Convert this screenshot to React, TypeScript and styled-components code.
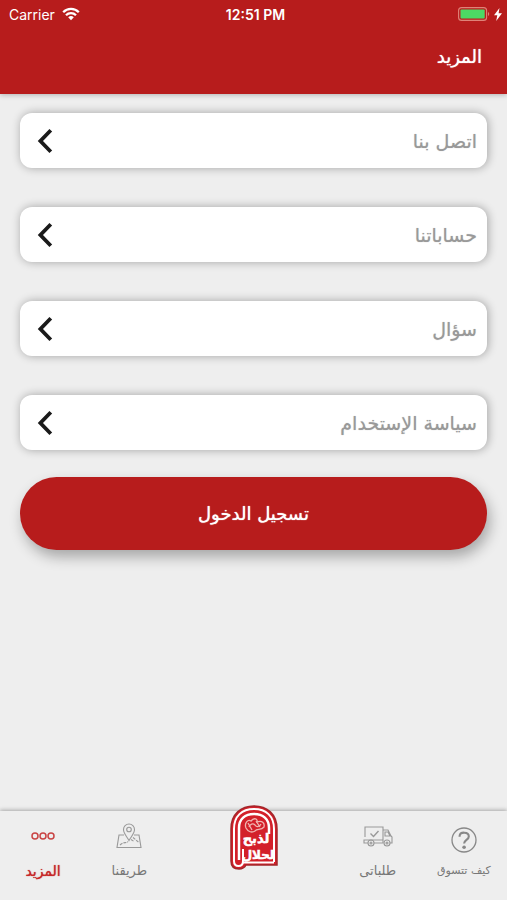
import React from "react";
import styled, { createGlobalStyle } from "styled-components";

const RED = "#b71c1c";

const Global = createGlobalStyle`
  *, *::before, *::after { box-sizing: border-box; }
  body {
    margin: 0;
    background: #eeeeee;
    font-family: "DejaVu Sans", "Noto Sans", sans-serif;
  }
  button { font-family: inherit; border: 0; cursor: pointer; }
  svg { display: block; }
`;

const Screen = styled.div`
  display: flex;
  flex-direction: column;
  min-height: 100vh;
`;

const Header = styled.header`
  background: ${RED};
  color: #ffffff;
  box-shadow: 0 1px 5px rgba(0, 0, 0, 0.25);
`;

const StatusBar = styled.div`
  display: grid;
  grid-template-columns: 1fr auto 1fr;
  align-items: center;
  height: 28px;
  padding: 0 5px 0 9px;
  font-family: Inter, sans-serif;
  font-size: 14px;
`;

const StatusGroup = styled.div<{ $end?: boolean }>`
  display: flex;
  align-items: center;
  justify-content: ${(p) => (p.$end ? "flex-end" : "flex-start")};
  gap: ${(p) => (p.$end ? 4 : 7)}px;
`;

const Clock = styled.time`
  font-weight: 600;
`;

const TitleBar = styled.div`
  display: flex;
  align-items: center;
  height: 66px;
  padding: 0 25px 8px;
`;

const Title = styled.h1`
  margin: 0;
  font-size: 18px;
  line-height: 28px;
  font-weight: 400;
  text-shadow: 0 0 1px currentColor;
`;

const Content = styled.main`
  flex: 1;
  padding: 19px 20px;
`;

const List = styled.ul`
  display: grid;
  gap: 39px;
  margin: 0 0 27px;
  padding: 0;
  list-style: none;
`;

const Row = styled.button`
  display: flex;
  align-items: center;
  justify-content: space-between;
  width: 100%;
  height: 55px;
  padding: 0 10px 0 16px;
  border-radius: 12px;
  background: #ffffff;
  color: #999999;
  font-size: 19px;
  line-height: 28px;
  text-shadow: 0 0 1px #bbbbbb;
  box-shadow: 1px 0 10px rgba(0, 0, 0, 0.32);
`;

const LoginButton = styled.button`
  width: 100%;
  height: 73px;
  border-radius: 37px;
  background: ${RED};
  color: #ffffff;
  font-size: 18px;
  line-height: 28px;
  text-shadow: 0 0 1px currentColor;
  box-shadow: 3px 7px 14px rgba(0, 0, 0, 0.3);
`;

const TabBar = styled.nav`
  display: grid;
  grid-template-columns: 17fr 17fr 32fr 17fr 17fr;
  height: 89px;
  background: #eeeeee;
  box-shadow: 0 -1px 4px rgba(0, 0, 0, 0.3);
`;

const Tab = styled.a<{ $active?: boolean; $small?: boolean }>`
  display: grid;
  grid-template-rows: 50px 20px;
  place-items: center;
  align-content: start;
  color: ${(p) => (p.$active ? "#c62828" : "#777777")};
  font-size: ${(p) => (p.$small ? 11 : p.$active ? 14 : 13)}px;
  line-height: 20px;
  text-shadow: ${(p) => (p.$active ? "0 0 1px currentColor" : "none")};
  white-space: nowrap;
  text-decoration: none;

  svg {
    margin-top: ${(p) => (p.$small ? 8 : 0)}px;
  }
`;

const LogoLink = styled.a`
  justify-self: center;
  margin-top: -7px;
`;

const Wifi = () => (
  <svg width="18" height="14" viewBox="0 0 18 14" fill="none" stroke="#fff" strokeWidth="2.3" aria-hidden="true">
    <path d="M1.2 5.2a11 11 0 0 1 15.6 0" />
    <path d="M4 8.2a7 7 0 0 1 10 0" />
    <path d="M9 13.2 6.2 10.3a4 4 0 0 1 5.6 0Z" fill="#fff" stroke="none" />
  </svg>
);

const Battery = () => (
  <svg width="32" height="14" viewBox="0 0 32 14" aria-hidden="true">
    <rect x="0.6" y="0.6" width="28" height="12.8" rx="3" fill="none" stroke="#df8378" strokeWidth="1.1" />
    <rect x="2.5" y="2.5" width="24.2" height="9" rx="1" fill="#4cd964" />
    <path d="M30 5v4c1.6-.5 1.6-3.5 0-4Z" fill="#df8378" />
  </svg>
);

const Bolt = () => (
  <svg width="8" height="13" viewBox="0 0 8 13" fill="#fff" aria-hidden="true">
    <path d="M5.5 0 0 7.3h3.3L2.2 13 8 5.3H4.6Z" />
  </svg>
);

const Chevron = () => (
  <svg width="17" height="26" viewBox="0 0 17 26" fill="none" stroke="#1a1a1a" strokeWidth="3.8" aria-hidden="true">
    <path d="M14.8 2.2 4.400 13l10.400 10.800" />
  </svg>
);

const QuestionIcon = () => (
  <svg width="26" height="26" viewBox="0 0 26 26" fill="none" stroke="#888" aria-hidden="true">
    <circle cx="13" cy="13" r="12" strokeWidth="1.3" />
    <path d="M8.600 9.800V9c.4-4.600 9.200-4.400 9.200.4 0 3.600-4.700 3.400-4.700 7.200" strokeWidth="2.1" />
    <circle cx="13.1" cy="20.300" r="1.800" fill="#888" stroke="none" />
  </svg>
);

const TruckIcon = () => (
  <svg width="30" height="21" viewBox="0 0 30 21" fill="none" stroke="#999" strokeWidth="1.1" aria-hidden="true">
    <path d="M5 17H1v-3h19M2 11V1h18v16h-9M20 4h5l3 6 1 1v6h-2M22 6h3l2 4h-5Z" />
    <path d="m7.500 7.500 3 3 5-5.500" strokeWidth="1.400" />
    <circle cx="8" cy="17" r="3" />
    <circle cx="8" cy="17" r="1" />
    <circle cx="24" cy="17" r="3" />
    <circle cx="24" cy="17" r="1" />
  </svg>
);

const MapIcon = () => (
  <svg width="26" height="26" viewBox="0 0 26 26" fill="none" stroke="#999" strokeWidth="1.1" aria-hidden="true">
    <path d="M8 12H3L1 24.500h24L23 12h-5" />
    <path d="M13 17.500C10.500 13 7.500 10.500 7.500 6.500a5.500 5.500 0 0 1 11 0c0 4-3 6.500-5.500 11Z" />
    <circle cx="13" cy="6.500" r="2.300" />
    <path d="M4 22c4-4 6-1 8-3.500M17 14.500l6 5M15 16.500l3 2" strokeDasharray="3 1" />
  </svg>
);

const MoreIcon = () => (
  <svg width="24" height="8" viewBox="0 0 24 8" fill="none" stroke="#c94444" strokeWidth="1.5" aria-hidden="true">
    <circle cx="4" cy="4" r="3" />
    <circle cx="12" cy="4" r="3" />
    <circle cx="20" cy="4" r="3" />
  </svg>
);

const Logo = () => (
  <svg width="50" height="66" viewBox="0 0 50 66" role="img" aria-label="الذبح الحلال">
    <path
      d="M2 25C2 10 12 2 25 2s23 8 23 23v36H17q-2 4-7 4-8 0-8-8Z"
      fill="#d3202a"
      stroke="#a3262a"
      strokeWidth="1.5"
    />
    <path
      d="M45 58V25C45 12 37 5 25 5S5 12 5 25v32q0 5 4.500 5T14 57V45"
      fill="none"
      stroke="#fff"
      strokeWidth="2"
    />
    <path d="M40 30v-6c0-9-6-14-15-14s-15 5-15 14v32" fill="none" stroke="#fff" strokeWidth="2.5" />
    <path d="M14 58.500h31" stroke="#fff" strokeWidth="2" />
    <g fill="none" stroke="#f0b4b0" strokeWidth="1.3">
      <path d="M17 24c-2-5 2-9 5-7 3-4 7-2 6 1 5-2 8 1 7 5-3 4-7 1-9 4-3 2-7 1-9-3Z" />
      <path d="M20 23c1-3 4-4 6-2 2 3 5 1 6-1M19 19l4 7M27 17l4 6" />
    </g>
    <g fill="#fff" stroke="#fff" strokeWidth="0.5" fontFamily="DejaVu Sans, sans-serif" fontWeight="700" textAnchor="middle">
      <text x="27" y="39" fontSize="13">لذبح</text>
      <text x="29" y="55" fontSize="12">لحلال</text>
    </g>
  </svg>
);

const rows = ["اتصل بنا", "حساباتنا", "سؤال", "سياسة الإستخدام"];

export default function App() {
  return (
    <>
      <Global />
      <Screen lang="ar" dir="rtl">
        <Header>
          <StatusBar dir="ltr">
            <StatusGroup>
              <span>Carrier</span>
              <Wifi />
            </StatusGroup>
            <Clock>12:51 PM</Clock>
            <StatusGroup $end>
              <Battery />
              <Bolt />
            </StatusGroup>
          </StatusBar>
          <TitleBar>
            <Title>المزيد</Title>
          </TitleBar>
        </Header>
        <Content>
          <List>
            {rows.map((label) => (
              <li key={label}>
                <Row type="button">
                  <span>{label}</span>
                  <Chevron />
                </Row>
              </li>
            ))}
          </List>
          <LoginButton type="button">تسجيل الدخول</LoginButton>
        </Content>
        <TabBar>
          <Tab href="#how" $small>
            <QuestionIcon />
            <span>كيف تتسوق</span>
          </Tab>
          <Tab href="#orders">
            <TruckIcon />
            <span>طلباتى</span>
          </Tab>
          <LogoLink href="#home">
            <Logo />
          </LogoLink>
          <Tab href="#route">
            <MapIcon />
            <span>طريقنا</span>
          </Tab>
          <Tab href="#more" $active aria-current="page">
            <MoreIcon />
            <span>المزيد</span>
          </Tab>
        </TabBar>
      </Screen>
    </>
  );
}
